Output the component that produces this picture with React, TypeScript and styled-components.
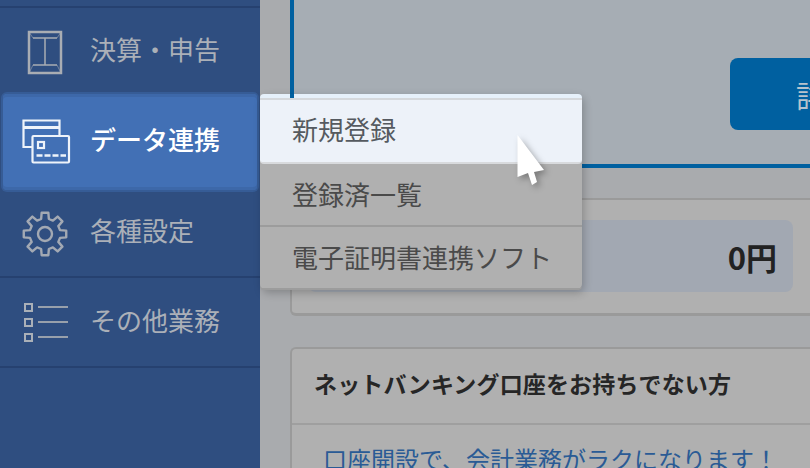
import React from "react";
import styled, { createGlobalStyle } from "styled-components";

const Global = createGlobalStyle`
  html, body { margin: 0; padding: 0; width: 810px; height: 468px; overflow: hidden; background: #a9abae; }
  #root { width: 810px; height: 468px; }
  * { box-sizing: border-box; }
`;

const Page = styled.div`
  position: relative;
  display: flex;
  width: 810px;
  height: 468px;
  overflow: hidden;
  font-family: "Noto Sans CJK JP", "Noto Sans", sans-serif;
`;

const Sidebar = styled.nav`
  flex: 0 0 260px;
  display: flex;
  flex-direction: column;
  background: #2f4e80;
`;

const NavStub = styled.div`
  height: 8px;
  border-bottom: 2px solid #264170;
`;

const NavRow = styled.div<{ $h: number; $active?: boolean; $lined?: boolean; $lift?: number }>`
  flex: 0 0 ${(p) => p.$h}px;
  display: flex;
  align-items: center;
  margin: ${(p) => (p.$active ? "1px 3px 1px 3px" : "0")};
  padding-left: ${(p) => (p.$active ? "87px" : "90px")};
  padding-bottom: ${(p) => p.$lift ?? 4}px;
  position: relative;
  font-size: 26px;
  line-height: 1;
  font-weight: ${(p) => (p.$active ? 500 : 400)};
  color: ${(p) => (p.$active ? "#ffffff" : "#abb0b8")};
  background: ${(p) => (p.$active ? "#4270b5" : "transparent")};
  border-radius: ${(p) => (p.$active ? "4px" : "0")};
  border-bottom: ${(p) => (p.$lined ? "2px solid #264170" : "none")};
  box-shadow: ${(p) =>
    p.$active
      ? "inset 0 3px 0 #3d68a9, inset 0 -3px 0 #3d68a9, 0 0 0 2px #365c96"
      : "none"};
`;

const IconSlot = styled.span<{ $left: number }>`
  position: absolute;
  left: ${(p) => p.$left}px;
  top: 50%;
  transform: translateY(-50%);
  display: flex;
`;

const Main = styled.main`
  flex: 1;
  display: flex;
  flex-direction: column;
  padding-left: 30px;
  background: #a9abae;
  min-width: 0;
`;

const TopCard = styled.section`
  flex: 0 0 168px;
  margin-right: -4px;
  display: flex;
  align-items: flex-end;
  padding: 0 0 34px 436px;
  background: #a6adb4;
  border-left: 4px solid #0060a0;
  border-bottom: 4px solid #0060a0;
`;

const BlueButton = styled.div`
  flex: 0 0 84px;
  height: 72px;
  padding: 14px 0 0 66px;
  background: #0060a0;
  border-radius: 8px 0 0 8px;
  color: #b7c3cd;
  font-size: 30px;
  line-height: 44px;
  white-space: nowrap;
  overflow: hidden;
`;

const TotalCard = styled.section`
  flex: 0 0 118px;
  margin-top: 30px;
  margin-right: -8px;
  padding: 20px 25px 20px 0;
  background: #b0b0b0;
  border: 2px solid #9a9a9a;
  border-right: none;
  border-bottom-width: 3px;
  border-radius: 6px 0 0 6px;
`;

const TotalPill = styled.div`
  height: 72px;
  display: flex;
  align-items: center;
  justify-content: flex-end;
  padding-right: 16px;
  margin-left: 16px;
  background: #a2a8b2;
  border-radius: 8px;
  color: #222222;
  font-size: 31px;
  font-weight: 700;
  line-height: 1;
`;

const BankCard = styled.section`
  flex: 0 0 160px;
  margin-top: 31px;
  margin-right: -8px;
  background: #b0b0b0;
  border: 2px solid #9a9a9a;
  border-right: none;
  border-radius: 6px 0 0 0;
`;

const BankHeader = styled.h2`
  margin: 0;
  height: 76px;
  padding: 0 0 6px 22px;
  display: flex;
  align-items: center;
  border-bottom: 2px solid #9f9f9f;
  color: #262626;
  font-size: 23px;
  letter-spacing: 0.15px;
  font-weight: 700;
  white-space: nowrap;
`;

const BankLink = styled.div`
  padding: 16px 0 0 31px;
  color: #2a5b95;
  font-size: 24px;
  line-height: 36px;
  white-space: nowrap;
`;

const Menu = styled.div`
  position: absolute;
  left: 260px;
  top: 94px;
  width: 322px;
  display: flex;
  flex-direction: column;
  border-radius: 6px;
  background: #b0b0b0;
  box-shadow: 2px 3px 8px rgba(0, 0, 0, 0.22);
`;

const MenuStrip = styled.div`
  position: relative;
  flex: 0 0 4px;
  background: #e6f0fa;
  border-radius: 6px 6px 0 0;
  &::before {
    content: "";
    position: absolute;
    left: 30px;
    top: 0;
    width: 4px;
    height: 4px;
    background: #0060a0;
  }
`;

const MenuItem = styled.div<{ $hover?: boolean; $h: number; $lift?: number }>`
  flex: 0 0 ${(p) => p.$h}px;
  display: flex;
  align-items: center;
  padding-left: 32px;
  padding-bottom: ${(p) => p.$lift ?? 0}px;
  font-size: 26px;
  line-height: 1;
  white-space: nowrap;
  color: ${(p) => (p.$hover ? "#555a60" : "#4a4a4a")};
  background: ${(p) => (p.$hover ? "#edf2f9" : "transparent")};
  border-radius: ${(p) => (p.$hover ? "0 0 4px 4px" : "0")};
  border-top: ${(p) => (p.$hover ? "2px solid #d5d8dc" : "none")};
  border-bottom: 2px solid ${(p) => (p.$hover ? "#d8dadd" : "#9c9c9c")};
  &:last-child { border-radius: 0 0 4px 4px; }
`;

const Cursor = styled.svg`
  position: absolute;
  left: 514px;
  top: 132px;
  filter: drop-shadow(3px 3px 3px rgba(0, 0, 0, 0.3));
`;

function gearPath(cx: number, cy: number, outer: number, inner: number, teeth: number) {
  const pts: string[] = [];
  const step = (Math.PI * 2) / teeth;
  for (let i = 0; i < teeth; i++) {
    const a = i * step - Math.PI / 2;
    const offs: Array<[number, number]> = [
      [-0.32, inner],
      [-0.2, outer],
      [0.2, outer],
      [0.32, inner],
    ];
    offs.forEach(([o, r]) => {
      const t = a + o * step;
      pts.push(`${(cx + r * Math.cos(t)).toFixed(2)} ${(cy + r * Math.sin(t)).toFixed(2)}`);
    });
  }
  return `M${pts.join(" L")} Z`;
}

export default function App() {
  return (
    <Page>
      <Global />
      <Sidebar>
        <NavStub />
        <NavRow $h={85}>
          <IconSlot $left={27}>
            <svg width="36" height="48" viewBox="0 0 36 48" fill="none" stroke="#a9adb3">
              <rect x="2" y="5" width="32" height="41" strokeWidth="2.5" />
              <path d="M6 11 H30 M18 11 V38 M6 38 H30" strokeWidth="1.5" />
              <path d="M2 5 L6 11 M34 5 L30 11 M2 46 L6 38 M34 46 L30 38" strokeWidth="1" opacity="0.55" />
            </svg>
          </IconSlot>
          決算・申告
        </NavRow>
        <NavRow $h={96} $active $lift={6}>
          <IconSlot $left={19}>
            <svg width="50" height="46" viewBox="0 0 50 46" fill="none" stroke="#eef3fa" strokeWidth="2.2">
              <path d="M10 28 H1.5 V1.5 H37.5 V16" />
              <path d="M1.5 8.5 H37.5" strokeWidth="3" />
              <rect x="10.5" y="17" width="36.5" height="26.5" rx="1" />
              <rect x="16" y="23" width="6" height="6" />
              <path d="M14.5 36.5 H44" strokeWidth="2.5" strokeDasharray="6 2" />
            </svg>
          </IconSlot>
          データ連携
        </NavRow>
        <NavRow $h={87} $lined $lift={7}>
          <IconSlot $left={22}>
            <svg width="46" height="46" viewBox="0 0 46 46" fill="none" stroke="#a3a9b3" strokeWidth="2.4" strokeLinejoin="round">
              <path d={gearPath(23, 23, 21.5, 15.5, 8)} />
              <circle cx="23" cy="23" r="7" />
            </svg>
          </IconSlot>
          各種設定
        </NavRow>
        <NavRow $h={90} $lined $lift={5}>
          <IconSlot $left={23}>
            <svg width="46" height="42" viewBox="0 0 46 42" fill="none">
              <rect x="2" y="3" width="7" height="7" stroke="#aab0b8" strokeWidth="2" />
              <rect x="2" y="18" width="7" height="7" stroke="#aab0b8" strokeWidth="2" />
              <rect x="2" y="33" width="7" height="7" stroke="#aab0b8" strokeWidth="2" />
              <path d="M15 6 H45 M15 21 H45 M15 36 H45" stroke="#98a0ab" strokeWidth="2" />
            </svg>
          </IconSlot>
          その他業務
        </NavRow>
      </Sidebar>
      <Main>
        <TopCard>
          <BlueButton>詳細</BlueButton>
        </TopCard>
        <TotalCard>
          <TotalPill>0円</TotalPill>
        </TotalCard>
        <BankCard>
          <BankHeader>ネットバンキング口座をお持ちでない方</BankHeader>
          <BankLink>口座開設で、会計業務がラクになります！</BankLink>
        </BankCard>
      </Main>
      <Menu>
        <MenuStrip />
        <MenuItem $hover $h={66} $lift={4}>新規登録</MenuItem>
        <MenuItem $h={63} $lift={2}>登録済一覧</MenuItem>
        <MenuItem $h={63} $lift={1}>電子証明書連携ソフト</MenuItem>
      </Menu>
      <Cursor width="34" height="58" viewBox="0 0 34 58">
        <path d="M3.5 3 L3.5 45 L14 41 L18 53 L23 50 L20 40 L30 38 Z" fill="#ffffff" />
      </Cursor>
    </Page>
  );
}
